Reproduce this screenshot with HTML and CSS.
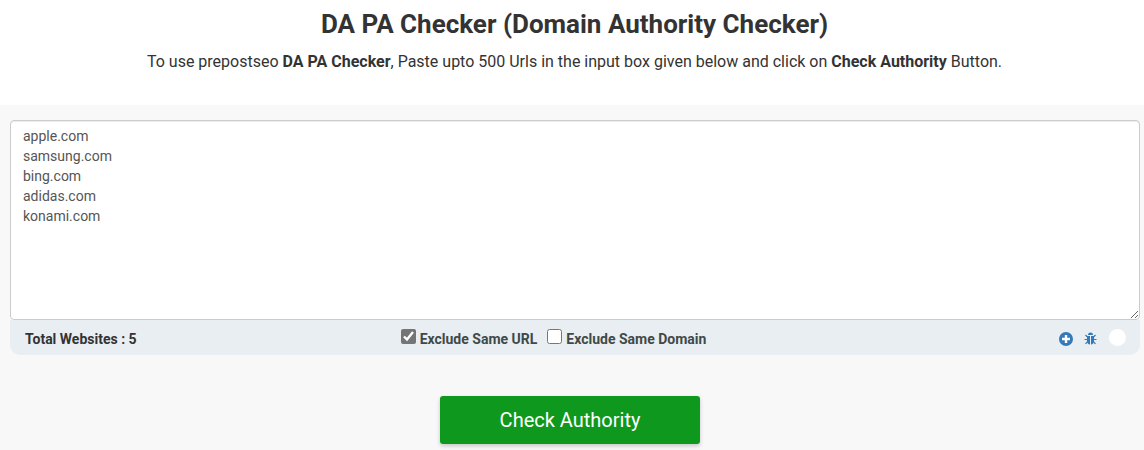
FILE: index.html
```html
<!DOCTYPE html>
<html lang="en">

<head>
    <meta charset="UTF-8">
    <meta name="viewport" content="width=device-width, initial-scale=1.0">
    <link rel="stylesheet" href="styles.css">
    <title>DA PA Checker</title>
</head>

<body>
    <header class="intro">
        <h1>DA PA Checker (Domain Authority Checker)</h1>
        <p>To use prepostseo <b>DA PA Checker</b>, Paste upto 500 Urls in the input box given below and click on <b>Check Authority</b> Button.</p>
    </header>

    <main class="tool">
        <form class="checker">
            <textarea class="urls" aria-label="Website URLs" spellcheck="false">apple.com
samsung.com
bing.com
adidas.com
konami.com</textarea>
            <div class="toolbar">
                <div class="total">Total Websites : <span id="count">5</span></div>
                <div class="options">
                    <label><input type="checkbox" checked> Exclude Same URL</label>
                    <label><input type="checkbox"> Exclude Same Domain</label>
                </div>
                <div class="actions">
                    <button type="button" class="icon-btn" aria-label="Add">
                        <svg width="14" height="14" viewBox="0 0 14 14">
                            <circle cx="7" cy="7" r="7" fill="#337ab7" />
                            <path d="M7 3v8M3 7h8" stroke="#fff" stroke-width="2.4" />
                        </svg>
                    </button>
                    <button type="button" class="icon-btn" aria-label="Crawl">
                        <svg width="14" height="14" viewBox="0 0 14 14">
                            <path d="M4 3a2.500 2.500 0 0 1 5 0zM3 4h3v8.500C4.200 12.300 3 11 3 9zM7 4h3v5c0 2-1.200 3.300-3 3.500z" fill="#337ab7" />
                            <path d="M3.500 5L1.500 3M3.500 7.500H.5M3.800 9.300l-2.300 2.500M9.500 5l2-2M9.500 7.500h3M9.200 9.300l2.300 2.500" fill="none" stroke="#337ab7" stroke-width="1.200" />
                        </svg>
                    </button>
                    <span class="dot"></span>
                </div>
            </div>
            <div class="submit-row">
                <button type="submit" class="submit">Check Authority</button>
            </div>
        </form>
    </main>
</body>

</html>
```
FILE: styles.css
```css
* {
    box-sizing: border-box;
}

body {
    margin: 0;
    font-family: Roboto, sans-serif;
    font-size: 14px;
    line-height: 20px;
    color: #333;
    background: #f8f8f8;
}

.intro {
    padding: 8px 10px 33px 15px;
    text-align: center;
    background: #fff;
}

.intro h1 {
    margin: 0 0 12px;
    font-size: 26px;
    font-weight: 700;
    line-height: 32px;
}

.intro p {
    margin: 0;
    font-size: 16px;
    line-height: 20px;
}

.tool {
    padding: 15px 4px 6px 10px;
}

.urls {
    display: block;
    width: 100%;
    height: 200px;
    padding: 5px 12px;
    font: inherit;
    color: #555;
    background: #fff;
    border: 1px solid #ccc;
    border-radius: 4px;
    box-shadow: inset 0 1px 1px rgba(0, 0, 0, 0.075);
    resize: vertical;
}

.toolbar {
    display: grid;
    grid-template-columns: repeat(3, 1fr);
    padding: 9px 0 6px;
    font-weight: 700;
    background: #e9eef2;
    border-radius: 0 0 10px 10px;
}

.total {
    padding-left: 15px;
}

.options {
    display: flex;
    gap: 10px;
    padding-left: 14px;
    color: #3f4a48;
}

.options label {
    display: flex;
    align-items: flex-start;
    gap: 4px;
}

.options input {
    width: 15px;
    height: 15px;
    margin: 0;
    accent-color: #757575;
}

.actions {
    display: flex;
    justify-content: flex-end;
    align-items: center;
    gap: 11px;
    padding-right: 14px;
}

.icon-btn {
    display: flex;
    padding: 0;
    background: none;
    border: none;
    cursor: pointer;
}

.dot {
    align-self: flex-start;
    width: 17px;
    height: 17px;
    background: #fff;
    border-radius: 50%;
}

.submit-row {
    padding: 41px 10px 0 0;
}

.submit {
    display: block;
    width: 260px;
    height: 48px;
    margin: 0 auto;
    font-family: inherit;
    font-size: 20px;
    color: #fff;
    background: #0e981d;
    border: none;
    border-radius: 3px;
    box-shadow: 0 2px 4px rgba(0, 0, 0, 0.2);
    cursor: pointer;
}
```
